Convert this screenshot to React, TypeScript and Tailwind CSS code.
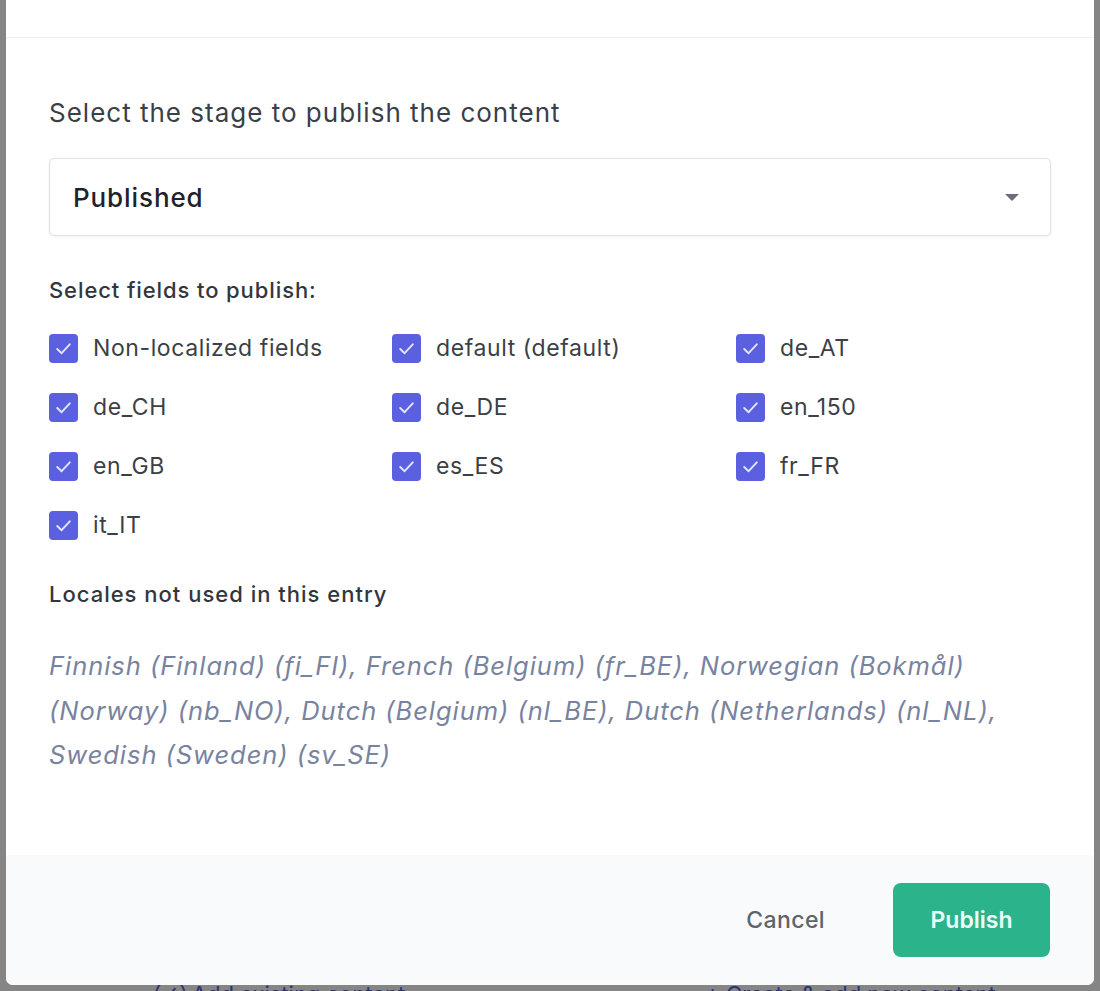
import React from "react";

const fields = [
  "Non-localized fields",
  "default (default)",
  "de_AT",
  "de_CH",
  "de_DE",
  "en_150",
  "en_GB",
  "es_ES",
  "fr_FR",
  "it_IT",
];

function Check() {
  return (
    <span className="flex h-[29px] w-[29px] shrink-0 items-center justify-center rounded-[4px] bg-[#5b60e0]">
      <svg width="21" height="21" viewBox="0 0 20 20" fill="none">
        <path d="M4 10.5 L8.2 14.5 L16 6" stroke="#e4e6ff" strokeWidth="1.8" strokeLinecap="round" strokeLinejoin="round" />
      </svg>
    </span>
  );
}

export default function App() {
  return (
    <div
      className="relative h-[991px] w-[1100px] overflow-hidden bg-[#858585]"
      style={{ fontFamily: "Inter, 'Noto Sans', sans-serif" }}
    >
      <div className="flex h-[985px] flex-col">
        <div className="ml-[6px] mr-[6px] flex h-[985px] flex-col overflow-hidden rounded-b-[7px] bg-white">
          <div className="h-[38px] shrink-0 border-b border-[#eeeff2]" />
          <div className="flex-1 px-[43px] pt-[59px]">
            <div className="text-[26px] leading-[32px] tracking-[1px] text-[#3a3f48]">
              Select the stage to publish the content
            </div>
            <div className="mt-[29px] flex h-[78px] items-center justify-between rounded-[5px] border border-[#dfe1e6] bg-white pl-[23px] pr-[30px] shadow-[0_1px_3px_rgba(0,0,0,0.06)]">
              <span className="text-[26px] font-medium tracking-[0.9px] text-[#1f2329]">Published</span>
              <svg width="16" height="9" viewBox="0 0 16 9">
                <path d="M1 1 L15 1 L8 8 Z" fill="#6b6e7a" />
              </svg>
            </div>
            <div className="mt-[40px] text-[22px] font-medium leading-[28px] tracking-[0.9px] text-[#33373d]">
              Select fields to publish:
            </div>
            <div className="mt-[30px] grid grid-cols-[343px_344px_1fr] gap-y-[30px]">
              {fields.map((f) => (
                <div key={f} className="flex h-[29px] items-center gap-[15px]">
                  <Check />
                  <span className="text-[23px] leading-[29px] tracking-[0.6px] text-[#3b3f46]">{f}</span>
                </div>
              ))}
            </div>
            <div className="mt-[40px] text-[22px] font-medium leading-[28px] tracking-[1px] text-[#33373d]">
              Locales not used in this entry
            </div>
            <div className="mt-[36px] pr-[40px] text-[25.5px] italic leading-[44.5px] tracking-[0.95px] text-[#7883a0]">
              Finnish (Finland) (fi_FI), French (Belgium) (fr_BE), Norwegian (Bokmål) (Norway) (nb_NO), Dutch (Belgium) (nl_BE), Dutch (Netherlands) (nl_NL), Swedish (Sweden) (sv_SE)
            </div>
          </div>
          <div className="flex h-[130px] shrink-0 items-center justify-end gap-[68px] bg-[#f8fafc] pr-[44px]">
            <button className="text-[23px] font-medium tracking-[0.4px] text-[#5f636b]">Cancel</button>
            <button className="flex h-[74px] w-[157px] items-center justify-center rounded-[8px] bg-[#2bb38b] text-[23px] font-semibold text-[#eafff6]">
              Publish
            </button>
          </div>
        </div>
      </div>
      <div className="flex h-[6px] overflow-hidden">
        <div className="-mt-[4px] ml-[155px] whitespace-nowrap text-[22px] leading-[26px] text-[#2e3470]">⊘ Add existing content</div>
        <div className="-mt-[4px] ml-[300px] whitespace-nowrap text-[22px] leading-[26px] text-[#2e3470]">+ Create &amp; add new content</div>
      </div>
    </div>
  );
}
